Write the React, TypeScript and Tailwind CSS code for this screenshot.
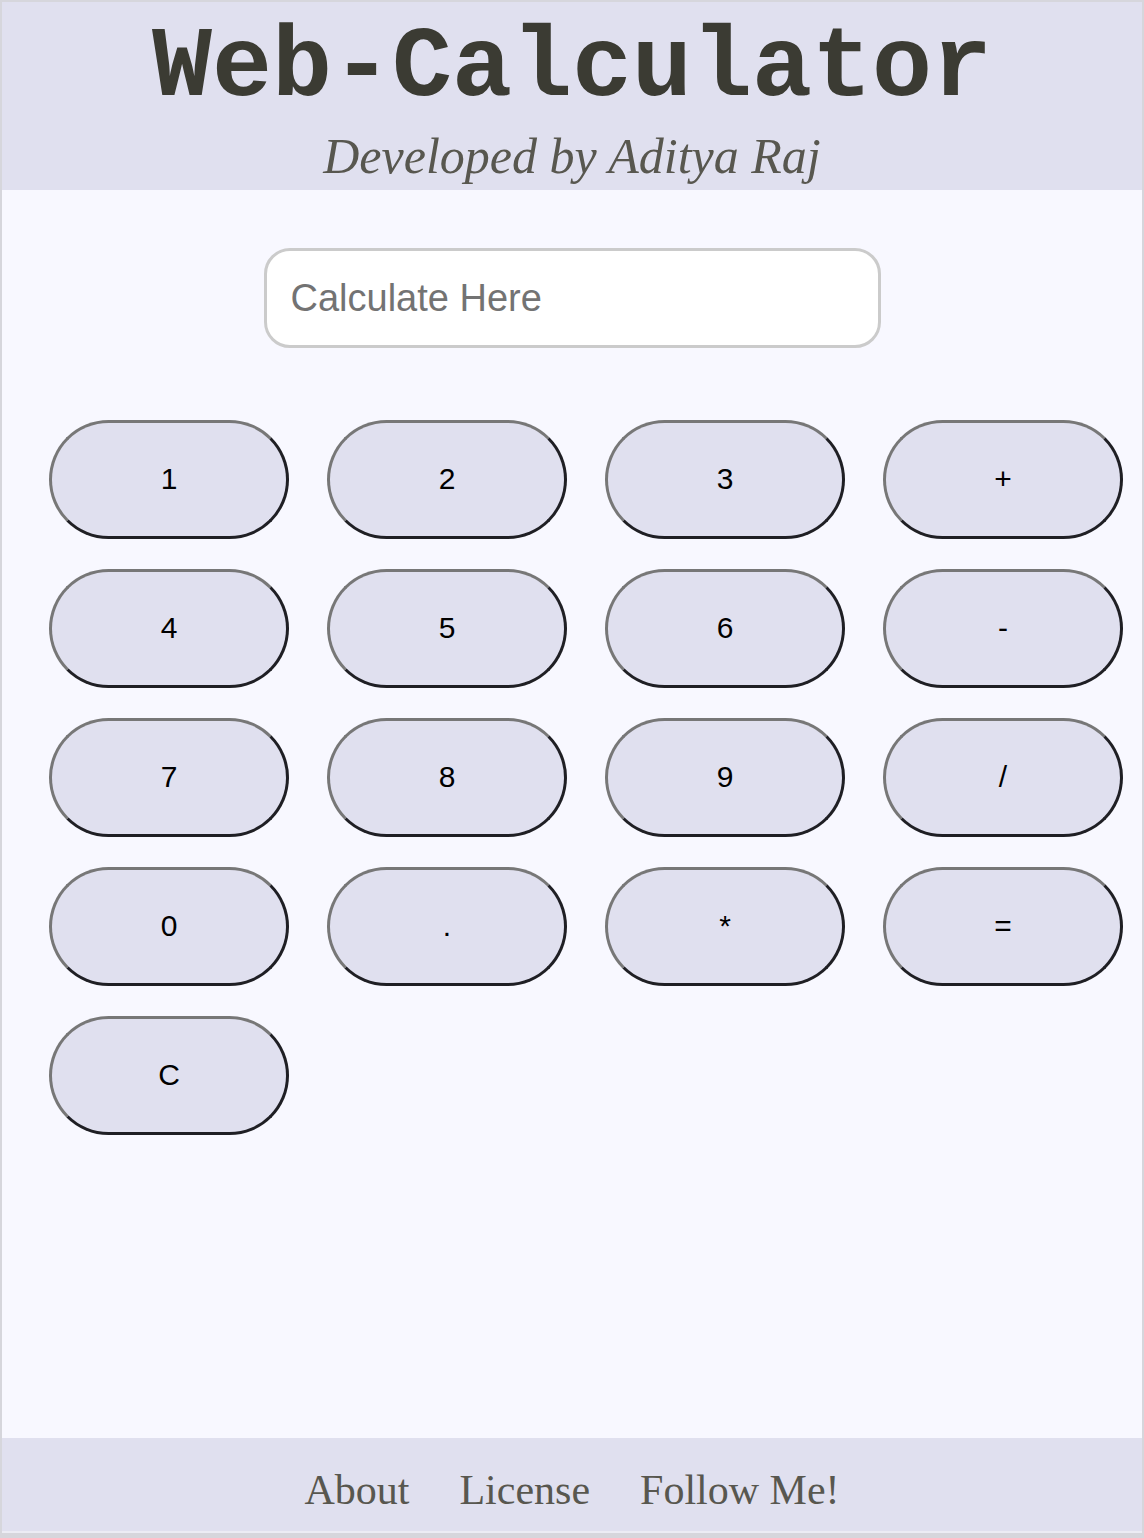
import React from "react";

const keys = ["1", "2", "3", "+", "4", "5", "6", "-", "7", "8", "9", "/", "0", ".", "*", "=", "C"];

function App() {
  return (
    <div className="h-[1538px] bg-[#d6d6dc] pt-[2px] px-[2px] pb-[5px]">
      <div className="flex flex-col h-full">
        <header className="h-[188px] bg-[#e0e0ef] flex flex-col items-center">
          <h1 className="mt-[24px] text-[100px] leading-[86px] font-bold text-[#3b3b33] font-['Liberation_Mono',monospace]">
            Web-Calculator
          </h1>
          <p className="mt-[16px] text-[50px] leading-[56px] italic text-[#58574f] font-['Liberation_Serif',serif]">
            Developed by Aditya Raj
          </p>
        </header>

        <main className="flex-1 bg-[#f8f8ff]">
          <div className="flex justify-center pt-[58px]">
            <input
              type="text"
              placeholder="Calculate Here"
              className="w-[617px] h-[100px] bg-white border-[3px] border-[#cbcbcb] rounded-[26px] pl-[24px] text-[38px] text-black placeholder:text-[#737373] font-['Liberation_Sans',sans-serif] outline-none"
            />
          </div>

          <div className="grid grid-cols-[repeat(4,240px)] gap-x-[38px] gap-y-[30px] pl-[47px] mt-[72px]">
            {keys.map((k) => (
              <button
                key={k}
                className="h-[119px] rounded-full bg-[#e0e0ef] border-[3px] border-t-[#777777] border-l-[#777777] border-b-[#1f1f24] border-r-[#1f1f24] pb-[3px] text-[30px] text-black font-['Liberation_Sans',sans-serif]"
              >
                {k}
              </button>
            ))}
          </div>
        </main>

        <footer className="h-[95px] bg-[#e0e0ef] border-b-[2px] border-[#ececf4] flex items-center justify-center gap-[50px] pt-[12px] text-[42px] text-[#58574f] font-['Liberation_Serif',serif]">
          <a href="#">About</a>
          <a href="#">License</a>
          <a href="#">Follow Me!</a>
        </footer>
      </div>
    </div>
  );
}

export default App;
